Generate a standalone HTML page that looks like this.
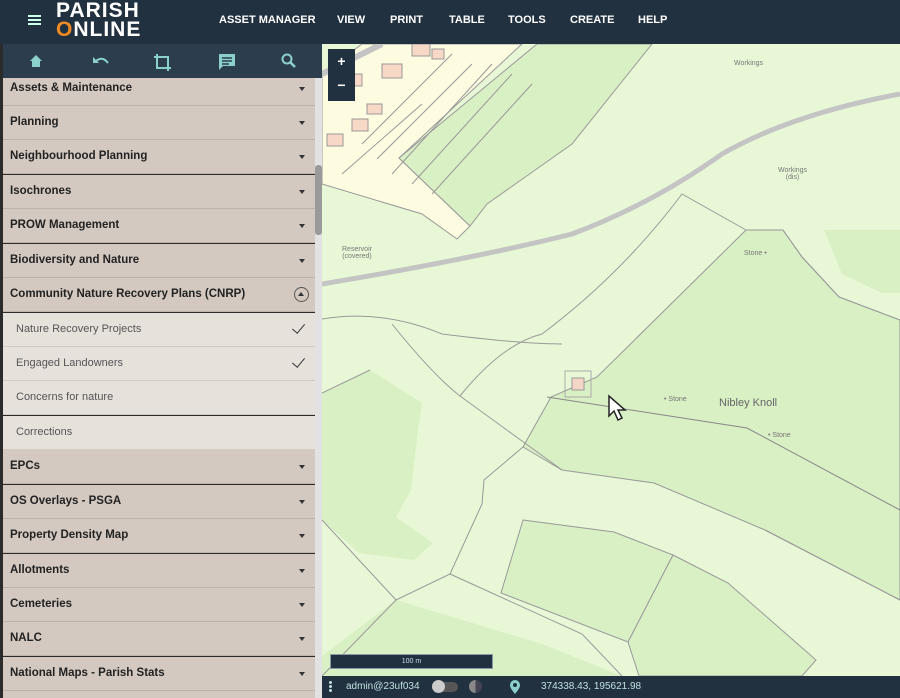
<!DOCTYPE html>
<html><head><meta charset="utf-8"><style>
*{margin:0;padding:0;box-sizing:border-box}
body{width:900px;height:698px;overflow:hidden;font-family:"Liberation Sans",sans-serif;position:relative;background:#e6f7d3}
.top{position:absolute;left:0;top:0;width:900px;height:44px;background:#223140}
.nav{position:absolute;top:14px;color:#fff;font-weight:bold;font-size:11px}
.side{position:absolute;left:0;top:44px;width:322px;height:654px;background:#2b2b2b}
.tb{position:absolute;left:3px;top:0;width:319px;height:34px;background:#2c3e4e}
.row{position:absolute;left:3px;width:312px;height:34px;background:#d3c9c0;border-bottom:1px solid #bdb3aa;font-size:11.5px;font-weight:bold;color:#222;padding:10px 0 0 7px}
.row .ar{position:absolute;right:10px;top:15px;width:0;height:0;border-left:3.5px solid transparent;border-right:3.5px solid transparent;border-top:4px solid #333}
.sub{background:#e7e1dc;font-weight:normal;color:#555;font-size:11px;padding-left:13px;border-bottom:1px solid #d2cbc4}
.chk{position:absolute;right:13px;top:8px;width:7px;height:12px;border-right:1.6px solid #333;border-bottom:1.6px solid #333;transform:rotate(40deg)}
.scr{position:absolute;left:315px;top:34px;width:7px;height:620px;background:#e2e2e2}
.map{position:absolute;left:322px;top:44px;width:578px;height:632px;overflow:hidden}
.bot{position:absolute;left:322px;top:676px;width:578px;height:22px;background:#223140;color:#bfe0e0;font-size:10px}
.lb{position:absolute;font-size:7px;color:#777}
</style></head><body>
<div class="top">
 <div style="position:absolute;left:28px;top:15px;width:13px;height:2px;background:#cfe;box-shadow:0 4px 0 #cfe,0 8px 0 #cfe"></div>
 <div style="position:absolute;left:56px;top:1px;color:#fff;font-weight:bold;font-size:21px;letter-spacing:1px;line-height:19px">PARISH<br><span style="color:#f08a24">O</span>NLINE</div>
 <div class="nav" style="left:219px">ASSET MANAGER</div>
 <div class="nav" style="left:337px">VIEW</div>
 <div class="nav" style="left:390px">PRINT</div>
 <div class="nav" style="left:449px">TABLE</div>
 <div class="nav" style="left:508px">TOOLS</div>
 <div class="nav" style="left:570px">CREATE</div>
 <div class="nav" style="left:638px">HELP</div>
</div>
<div class="side">
 <div class="tb">
  <svg width="319" height="34" fill="#8cd0cc" stroke="#8cd0cc">
   <path d="M27 17 L33 11 L39 17 H37 V23 H29 V17Z" stroke="none"/>
   <path d="M92 18 Q99 11 105 19" fill="none" stroke-width="2"/><path d="M90 13 V19 H96Z" stroke="none"/>
   <path d="M154 10 V24 H168 M151 13 H165 V27" fill="none" stroke-width="2"/>
   <path d="M216 10 H232 V22 H220 L216 26Z" stroke="none"/><path d="M219 14H229M219 17H229M219 20H226" stroke="#2c3e4e" stroke-width="1.4"/>
   <circle cx="284" cy="15" r="4.5" fill="none" stroke-width="2"/><path d="M287 18 L292 23" stroke-width="2.5"/>
  </svg>
 </div>
 <div class="scr"><div style="position:absolute;left:0;top:87px;width:7px;height:70px;background:#9a9a9a;border-radius:3px"></div></div>
</div>
<div style="position:absolute;left:0;top:78px;width:322px;height:620px;overflow:hidden">
 <div class="row" style="top:-6px">Assets &amp; Maintenance<i class="ar"></i></div>
 <div class="row" style="top:28px">Planning<i class="ar"></i></div>
 <div class="row" style="top:62px">Neighbourhood Planning<i class="ar"></i></div>
 <div class="row" style="top:97px">Isochrones<i class="ar"></i></div>
 <div class="row" style="top:131px">PROW Management<i class="ar"></i></div>
 <div class="row" style="top:166px">Biodiversity and Nature<i class="ar"></i></div>
 <div class="row" style="top:200px">Community Nature Recovery Plans (CNRP)<span style="position:absolute;right:6px;top:9px;width:15px;height:15px;border:1px solid #555;border-radius:50%"><i style="position:absolute;left:3px;top:4px;border-left:3.5px solid transparent;border-right:3.5px solid transparent;border-bottom:4px solid #333"></i></span></div>
 <div class="row sub" style="top:235px">Nature Recovery Projects<i class="chk"></i></div>
 <div class="row sub" style="top:269px">Engaged Landowners<i class="chk"></i></div>
 <div class="row sub" style="top:303px">Concerns for nature</div>
 <div class="row sub" style="top:338px">Corrections</div>
 <div class="row" style="top:372px">EPCs<i class="ar"></i></div>
 <div class="row" style="top:407px">OS Overlays - PSGA<i class="ar"></i></div>
 <div class="row" style="top:441px">Property Density Map<i class="ar"></i></div>
 <div class="row" style="top:476px">Allotments<i class="ar"></i></div>
 <div class="row" style="top:510px">Cemeteries<i class="ar"></i></div>
 <div class="row" style="top:544px">NALC<i class="ar"></i></div>
 <div class="row" style="top:579px">National Maps - Parish Stats<i class="ar"></i></div>
 <div class="row" style="top:613px"></div>
</div>
<div class="map">
 <svg width="578" height="632" stroke="#999" stroke-width="1" fill="none">
  <rect width="578" height="632" fill="#e8f8d6" stroke="none"/>
  <path d="M0 140 L0 30 L40 0 L200 0 L77 114 L148 182 L135 195 L100 170 Z" fill="#fdfbe0"/>
  <path d="M77 114 L215 0 L330 0 L250 100 L165 160 L148 182 Z" fill="#d9efc4"/>
  <path d="M424 186 L461 186 L480 213 L517 253 L578 276 L578 556 L443 486 L332 439 L240 426 L201 403 L229 353 L275 333 Z" fill="#d9efc4"/>
  <path d="M502 186 L578 186 L578 249 L560 249 L520 230Z" fill="#d9efc4" stroke="none"/>
  <path d="M0 349 L48 326 L100 359 L96 386 L89 446 L74 473 L111 499 L92 516 L37 509 L0 476Z" fill="#d9efc4" stroke="none"/>
  <path d="M201 476 L292 488 L351 511 L306 598 L179 549Z" fill="#d9efc4"/>
  <path d="M351 511 L406 539 L494 616 L480 632 L317 632 L306 598Z" fill="#d9efc4"/>
  <path d="M0 632 L0 612 L74 556 L220 600 L300 632Z" fill="#d9efc4" stroke="none"/>
  <path d="M0 240 Q150 215 250 190 Q330 160 400 110 Q470 70 578 50" stroke="#c4c4c4" stroke-width="5"/>
  <path d="M0 30 L60 0" stroke="#c4c4c4" stroke-width="6"/>
  <path d="M0 275 Q60 265 120 290 Q200 300 240 300"/>
  <path d="M0 349 L48 326"/>
  <path d="M70 280 Q110 330 138 352 L200 397 L240 426"/>
  <path d="M138 352 Q180 300 220 290 Q300 230 360 150 L424 186"/>
  <path d="M0 476 L74 556 L128 530 L160 460 L162 436 L201 403"/>
  <path d="M74 556 L0 632"/>
  <path d="M128 530 L260 590 L300 632"/>
  <path d="M443 486 L578 556"/>
  <path d="M225 353 L425 384 L578 466" stroke="#888"/>
  <path d="M461 186 L480 213 L517 253 L578 276"/>
  <path d="M243 327 h26 v26 h-26z" stroke="#aaa"/><path d="M250 334 h12 v12 h-12z" fill="#f5d6c6"/>
  <path d="M20 30 h20 v12 h-20z M45 60 h15 v10 h-15z M60 20 h20 v14 h-20z M90 0 h18 v12 h-18z M30 75 h16 v12 h-16z M5 90 h16 v12 h-16z M110 5 h12 v10 h-12z" fill="#f7d8c6"/>
  <path d="M40 100 L130 10 M55 115 L150 20 M70 130 L170 20 M90 140 L190 30 M110 150 L210 40 M20 130 L100 60"/>
 </svg>
 <div style="position:absolute;left:6px;top:5px;width:27px;height:52px;background:#223140;color:#fff;font-weight:bold;font-size:14px;text-align:center;line-height:24px">+<br>−</div>
 <div class="lb" style="left:20px;top:202px;text-align:center">Reservoir<br>(covered)</div>
 <div class="lb" style="left:412px;top:16px">Workings</div>
 <div class="lb" style="left:456px;top:123px;text-align:center">Workings<br>(dis)</div>
 <div class="lb" style="left:422px;top:206px">Stone •</div>
 <div class="lb" style="left:342px;top:352px">• Stone</div>
 <div class="lb" style="left:446px;top:388px">• Stone</div>
 <div style="position:absolute;left:397px;top:353px;font-size:11px;color:#666">Nibley Knoll</div>
 <svg style="position:absolute;left:285px;top:350px" width="22" height="30"><path d="M2 2 L2 22 L7 17 L11 26 L15 24 L11 16 L18 16Z" fill="#fff" stroke="#222" stroke-width="1.5"/></svg>
 <div style="position:absolute;left:8px;top:610px;width:163px;height:15px;background:#223140;border:1px solid #8a9aa8;color:#cde;font-size:7px;text-align:center;line-height:13px">100 m</div>
</div>
<div class="bot">
 <div style="position:absolute;left:7px;top:5px;width:3px;height:3px;background:#bfe0e0;box-shadow:0 4px 0 #bfe0e0,0 8px 0 #bfe0e0;border-radius:50%"></div>
 <div style="position:absolute;left:24px;top:5px">admin@23uf034</div>
 <div style="position:absolute;left:110px;top:6px;width:26px;height:10px;border-radius:5px;background:#555"></div>
 <div style="position:absolute;left:110px;top:4px;width:13px;height:13px;border-radius:50%;background:#ccc"></div>
 <div style="position:absolute;left:147px;top:4px;width:13px;height:13px;border-radius:50%;background:linear-gradient(90deg,#888 50%,#445 50%)"></div>
 <svg style="position:absolute;left:187px;top:3px" width="12" height="16"><path d="M6 15 C1 9 1 7 1 6 A5 5 0 0 1 11 6 C11 7 11 9 6 15Z" fill="#8cd0cc"/><circle cx="6" cy="6" r="2" fill="#223140"/></svg>
 <div style="position:absolute;left:219px;top:5px">374338.43, 195621.98</div>
</div>
</body></html>
